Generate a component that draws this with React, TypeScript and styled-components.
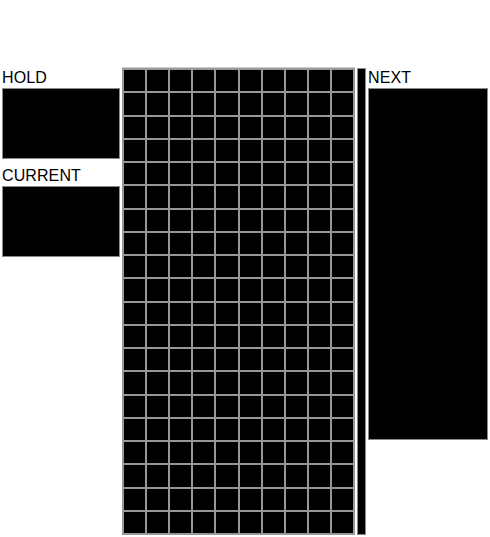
import React from "react";
import styled, { createGlobalStyle } from "styled-components";

const Global = createGlobalStyle`
  html, body { margin: 0; padding: 0; background: #fff; }
  body { font-family: "Liberation Sans", Arial, sans-serif; }
`;

const Page = styled.div`
  display: flex;
  align-items: flex-start;
  padding: 67px 0 0 2px;
  gap: 2px;
`;

const Side = styled.div<{ $w: number }>`
  width: ${(p) => p.$w}px;
  display: flex;
  flex-direction: column;
  padding-top: 2px;
`;

const Label = styled.div`
  font-size: 16px;
  line-height: 18px;
  height: 18px;
  color: #000;
  margin-bottom: 1px;
  letter-spacing: 0.1px;
`;

const Box = styled.div<{ $h: number; $mb?: number }>`
  height: ${(p) => p.$h}px;
  background: #000;
  border: 1px solid #8a8a8a;
  box-sizing: border-box;
  margin-bottom: ${(p) => p.$mb ?? 0}px;
`;

const Board = styled.div`
  width: 233px;
  height: 468px;
  box-sizing: border-box;
  display: grid;
  grid-template-columns: repeat(10, 1fr);
  grid-template-rows: repeat(20, 1fr);
  gap: 2px;
  padding: 2px;
  background: #979797;
  border-top: 1px solid #d0d0d0;
`;

const Cell = styled.div`
  background: #000;
`;

const Bar = styled.div`
  width: 9px;
  height: 467px;
  margin-top: 1px;
  box-sizing: border-box;
  background: #000;
  border: 1px solid #8a8a8a;
`;

export default function App() {
  return (
    <>
      <Global />
      <Page>
        <Side $w={118}>
          <Label>HOLD</Label>
          <Box $h={71} $mb={8} />
          <Label>CURRENT</Label>
          <Box $h={71} />
        </Side>
        <Board>
          {Array.from({ length: 200 }, (_, i) => (
            <Cell key={i} />
          ))}
        </Board>
        <Bar />
        <Side $w={120}>
          <Label>NEXT</Label>
          <Box $h={352} />
        </Side>
      </Page>
    </>
  );
}
